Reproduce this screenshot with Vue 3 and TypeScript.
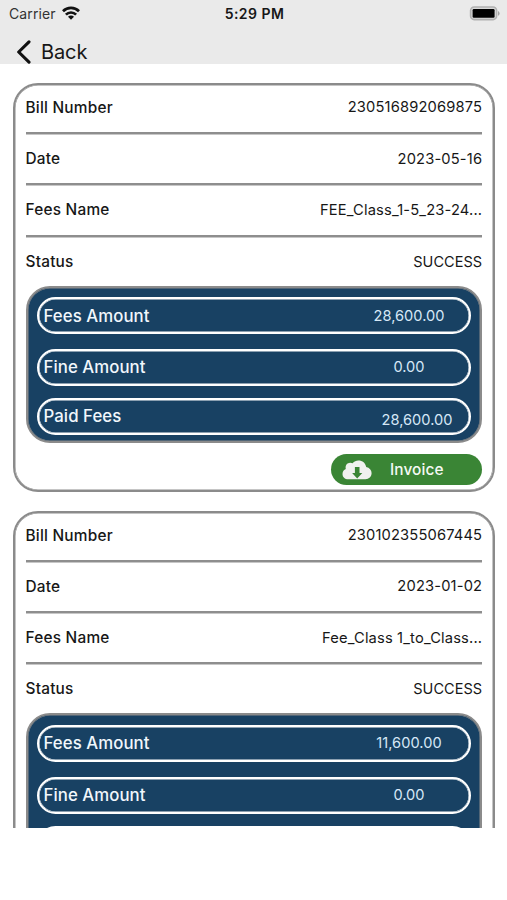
<script setup lang="ts">
interface Bill {
  billNumber: string
  date: string
  feesName: string
  status: string
  feesAmount: string
  fineAmount: string
  paidFees: string
}

const bills: Bill[] = [
  {
    billNumber: '230516892069875',
    date: '2023-05-16',
    feesName: 'FEE_Class_1-5_23-24...',
    status: 'SUCCESS',
    feesAmount: '28,600.00',
    fineAmount: '0.00',
    paidFees: '28,600.00',
  },
  {
    billNumber: '230102355067445',
    date: '2023-01-02',
    feesName: 'Fee_Class 1_to_Class...',
    status: 'SUCCESS',
    feesAmount: '11,600.00',
    fineAmount: '0.00',
    paidFees: '11,600.00',
  },
]
</script>

<template>
  <div class="screen">
    <header class="header">
      <div class="status-bar">
        <div class="carrier">
          <span class="carrier-name">Carrier</span>
          <svg class="wifi" viewBox="0 0 18 14" width="18" height="14">
            <g fill="none" stroke="#111" stroke-width="2.7">
              <path d="M1 5.2A11.3 11.3 0 0 1 17 5.2" />
              <path d="M3.9 8.6A7.2 7.2 0 0 1 14.1 8.6" />
            </g>
            <path d="M9 13.8 6 10.8A4.2 4.2 0 0 1 12 10.8Z" fill="#111" />
          </svg>
        </div>
        <span class="clock">5:29 PM</span>
        <svg class="battery" viewBox="0 0 31 15" width="31" height="15">
          <rect x="1.6" y="1" width="26" height="12.6" rx="3.6" fill="#d8d8d8" stroke="#b0b0b0" stroke-width="1.6" />
          <rect x="3.6" y="3" width="22" height="8.8" rx="1.2" fill="#000" />
          <path d="M29 5v4.8q1.6-.7 1.6-2.4T29 5Z" fill="#a2a2a2" />
        </svg>
      </div>
      <div class="back">
        <svg class="chevron" viewBox="0 0 15 24" width="15" height="24">
          <path d="M13 1.8 2.7 12 13 22.2" fill="none" stroke="#111" stroke-width="3.1" stroke-linecap="round" stroke-linejoin="round" />
        </svg>
        <span class="back-label">Back</span>
      </div>
    </header>

    <main class="list">
      <article v-for="bill in bills" :key="bill.billNumber" class="card">
        <div class="row"><span class="label">Bill Number</span><span class="value number">{{ bill.billNumber }}</span></div>
        <div class="row"><span class="label">Date</span><span class="value date">{{ bill.date }}</span></div>
        <div class="row"><span class="label">Fees Name</span><span class="value name">{{ bill.feesName }}</span></div>
        <div class="row last"><span class="label">Status</span><span class="value status">{{ bill.status }}</span></div>

        <section class="panel">
          <div class="pill"><span>Fees Amount</span><span class="amount">{{ bill.feesAmount }}</span></div>
          <div class="pill fine"><span>Fine Amount</span><span class="amount">{{ bill.fineAmount }}</span></div>
          <div class="pill paid"><span>Paid Fees</span><span class="amount">{{ bill.paidFees }}</span></div>
        </section>

        <button class="invoice" type="button">
          <svg viewBox="0 0 30 20" width="30" height="20">
            <path d="M6.4 19.2C2.8 19.2.5 17 .5 13.9c0-2.6 1.5-4.2 3.3-4.9C3 5.4 5 2.8 8.2 2.7c1 0 1.7.2 2.4.6C12.2 1.3 14.2.4 16.3.4c4.3 0 7.3 2.6 7.9 6.6 3.3.8 5.4 3 5.4 6.1 0 3.6-2.5 6.1-6.2 6.1Z" fill="#f0f1ef" />
            <path d="M12.9 7.1h4.6v6h2.8l-5.1 5.4-5.1-5.4h2.8Z" fill="#3a8535" />
          </svg>
          <span>Invoice</span>
        </button>
      </article>
    </main>
  </div>
</template>

<style>
body {
  background: #fff;
}
</style>

<style scoped>
.screen {
  width: 507px;
  height: 900px;
  overflow: hidden;
  background: #fff;
  color: #171717;
  font-family: Inter, 'Liberation Sans', sans-serif;
}

.header {
  height: 64.4px;
  background: #eaeaea;
  overflow: hidden;
}

.status-bar {
  display: grid;
  grid-template-columns: 1fr auto 1fr;
  align-items: center;
  height: 27px;
  padding: 0 7px 0 9px;
  box-sizing: border-box;
}

.carrier {
  display: flex;
  align-items: center;
  gap: 6px;
}

.carrier-name {
  font-size: 14px;
  color: #333;
  letter-spacing: 0.12px;
}

.wifi {
  margin-top: -2px;
}

.clock {
  font-size: 14px;
  font-weight: 600;
  letter-spacing: 0.45px;
}

.battery {
  justify-self: end;
  margin-top: -1px;
}

.back {
  display: flex;
  align-items: center;
  gap: 10px;
  height: 50px;
  padding-left: 16px;
}

.back-label {
  font-size: 20px;
  letter-spacing: -0.1px;
}

.list {
  display: flex;
  flex-direction: column;
  gap: 18.7px;
  height: 763.6px;
  padding: 18.6px 12.5px 0 13px;
  box-sizing: border-box;
  overflow: hidden;
}

.card {
  display: flex;
  flex: none;
  flex-direction: column;
  height: 409px;
  padding: 0 10.5px;
  box-sizing: border-box;
  border: 2px solid #8b8b8b;
  border-radius: 25px;
  box-shadow: inset 0 0 0 0.5px #8b8b8b;
}

.row {
  display: flex;
  flex: none;
  align-items: center;
  justify-content: space-between;
  height: 51.3px;
  box-sizing: border-box;
  border-bottom: 2px solid #8e8e8e;
  box-shadow: 0 0.5px #8e8e8e;
}

.row:first-child {
  height: 49px;
  padding-bottom: 2px;
}

.row.last {
  height: 49px;
  border-bottom: 0;
  box-shadow: none;
}

.label {
  font-size: 15.4px;
  font-weight: 550;
  letter-spacing: 0.22px;
}

.value {
  font-size: 14.7px;
  letter-spacing: 0.16px;
  margin-right: -0.2px;
}

.status {
  font-size: 14.5px;
  letter-spacing: 0.05px;
}

.panel {
  display: flex;
  flex: none;
  flex-direction: column;
  height: 157px;
  padding: 9.7px 9.5px 0;
  box-sizing: border-box;
  border: 2px solid #8b8b8b;
  border-radius: 24px;
  background: #184163;
  box-shadow: inset 0 0 0 0.5px #8b8b8b;
}

.pill {
  display: flex;
  flex: none;
  align-items: center;
  justify-content: space-between;
  height: 37px;
  padding-left: 4.5px;
  box-sizing: border-box;
  border: 2px solid #fff;
  border-radius: 19px;
  box-shadow: inset 0 0 0 0.5px #fff;
  color: #f1f7fc;
  font-size: 16.8px;
  font-weight: 500;
  letter-spacing: 0.06px;
}

.fine {
  margin-top: 14.6px;
}

.paid {
  margin-top: 12px;
}

.amount {
  width: 119px;
  text-align: center;
  color: #d6e8f7;
  font-size: 14.6px;
  font-weight: 400;
  letter-spacing: 0.03px;
}

.paid .amount {
  width: 103px;
  padding-top: 8px;
}

.invoice {
  display: flex;
  align-items: center;
  align-self: flex-end;
  gap: 18.5px;
  width: 151px;
  height: 31px;
  margin-top: 11.5px;
  padding: 0 0 0 10.5px;
  border: 0;
  border-radius: 16px;
  background: #3a8535;
  color: #f4f9f3;
  font-family: inherit;
  font-size: 15.4px;
  font-weight: 500;
  letter-spacing: 0.1px;
}
</style>
